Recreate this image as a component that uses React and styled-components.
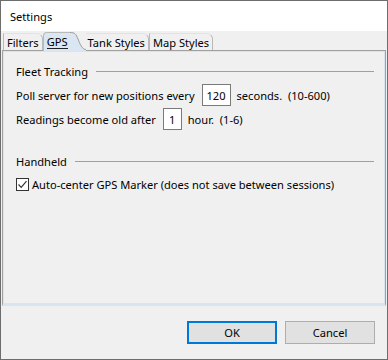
import React from 'react'
import styled, { createGlobalStyle } from 'styled-components'

const GlobalStyle = createGlobalStyle`
  body {
    margin: 0;
    background: #ffffff;
  }
`;

const Window = styled.div`
  width: 388px;
  height: 360px;
  box-sizing: border-box;
  border: 1px solid #6d6d6d;
  background: #f0f0f0;
  display: flex;
  flex-direction: column;
  font-family: "Noto Sans", sans-serif;
  font-size: 11.1px;
  color: #000;
`;

const TitleBar = styled.div`
  height: 30px;
  background: #ffffff;
  padding-left: 9px;
  display: flex;
  align-items: center;
`;

const Body = styled.div`
  padding: 0 1px;
  display: flex;
  flex-direction: column;
`;

const TabStrip = styled.div`
  height: 19px;
  display: flex;
  align-items: flex-end;
  padding-left: 1px;
`;

const Tab = styled.div`
  position: relative;
  height: 17px;
  box-sizing: border-box;
  display: flex;
  align-items: center;
  padding: 0 ${p => p.$right || 3}px 0 ${p => (p.$noLeft ? '2px' : '3px')};
  border-left: ${p => (p.$noLeft ? 'none' : '1px solid #b9b9b9')};
  border-right: 1px solid #b9b9b9;
  border-top: 1px solid #e2e2e2;
  border-top-right-radius: 6px;
  background: #f0f0f0;
`;

const ActiveTab = styled.div`
  position: relative;
  z-index: 1;
  height: 19px;
  margin-bottom: -1px;
  display: flex;
  align-items: stretch;
`;

const ActiveLabel = styled.div`
  display: flex;
  align-items: center;
  padding: 0 2px 1px 3px;
  background: #dbe6f3;
  border-left: 1px solid #b9b9b9;
  border-top: 1px solid #b9b9b9;
  border-top-left-radius: 4px;
`;

const FocusText = styled.span`
  line-height: 13px;
  border-bottom: 1px solid #202020;
`;

const Panel = styled.div`
  height: 256px;
  box-sizing: border-box;
  border: 1px solid #a0a0a0;
  border-bottom: 2px solid #d9e4f1;
  box-shadow: inset 0 0 0 1px #d9e4f1;
  padding: 12px 11px 0 13px;
  display: flex;
  flex-direction: column;
`;

const GroupHeader = styled.div`
  display: flex;
  align-items: center;
  gap: 8px;
  height: 16px;
  margin-top: ${p => p.$top || 0}px;

  &::after {
    content: '';
    flex: 1;
    height: 1px;
    background: #a0a0a0;
  }
`;

const Row = styled.div`
  display: flex;
  align-items: center;
  height: ${p => p.$h || 22}px;
  margin-top: ${p => p.$top || 0}px;
  white-space: pre;
`;

const NumberBox = styled.div`
  width: ${p => p.$w}px;
  height: 22px;
  box-sizing: border-box;
  border: 1px solid #7a7a7a;
  background: #ffffff;
  display: flex;
  align-items: center;
  justify-content: center;
  margin: 0 6px 0 7px;
`;

const CheckBox = styled.div`
  width: 13px;
  height: 13px;
  box-sizing: border-box;
  border: 1px solid #333333;
  background: #ffffff;
  display: flex;
  align-items: center;
  justify-content: center;
  margin-right: 3px;
`;

const Footer = styled.div`
  flex: 1;
  display: flex;
  justify-content: flex-end;
  align-items: flex-start;
  gap: 8px;
  padding: 15px 12px 0 0;
`;

const Button = styled.button`
  width: 90px;
  height: 23px;
  box-sizing: border-box;
  background: #e1e1e1;
  border: ${p => (p.$default ? '2px solid #0078d7' : '1px solid #adadad')};
  font-family: inherit;
  font-size: 11.1px;
  color: #000;
  padding: 0;
`;

const TabCurve = () => (
  <svg width="16" height="19" viewBox="0 0 16 19">
    <path d="M0 0.5 C5 0.5 6 2 8 7 S12 17.5 16 17.5 L16 19 L0 19 Z" fill="#dbe6f3" />
    <path d="M0 0.5 C5 0.5 6 2 8 7 S12 17.5 16 17.5" fill="none" stroke="#9a9a9a" strokeWidth="1" />
  </svg>
);

const Check = () => (
  <svg width="11" height="11" viewBox="0 0 11 11">
    <path d="M1.5 5.5 L4.2 8.3 L9.5 2.2" fill="none" stroke="#333" strokeWidth="1.2" />
  </svg>
);

const App = () => {
  return (
    <>
      <GlobalStyle />
      <Window>
        <TitleBar>Settings</TitleBar>
        <Body>
          <TabStrip>
            <Tab>Filters</Tab>
            <ActiveTab>
              <ActiveLabel>
                <FocusText>GPS</FocusText>
              </ActiveLabel>
              <TabCurve />
            </ActiveTab>
            <Tab $noLeft>Tank Styles</Tab>
            <Tab>Map Styles</Tab>
          </TabStrip>
          <Panel>
            <GroupHeader>Fleet Tracking</GroupHeader>
            <Row $top={5}>
              Poll server for new positions every
              <NumberBox $w={29}>120</NumberBox>
              seconds.  (10-600)
            </Row>
            <Row $top={2}>
              Readings become old after
              <NumberBox $w={19}>1</NumberBox>
              hour.  (1-6)
            </Row>
            <GroupHeader $top={23}>Handheld</GroupHeader>
            <Row $top={7} $h={16}>
              <CheckBox><Check /></CheckBox>
              Auto-center GPS Marker (does not save between sessions)
            </Row>
          </Panel>
        </Body>
        <Footer>
          <Button $default>OK</Button>
          <Button>Cancel</Button>
        </Footer>
      </Window>
    </>
  )
}

export default App
